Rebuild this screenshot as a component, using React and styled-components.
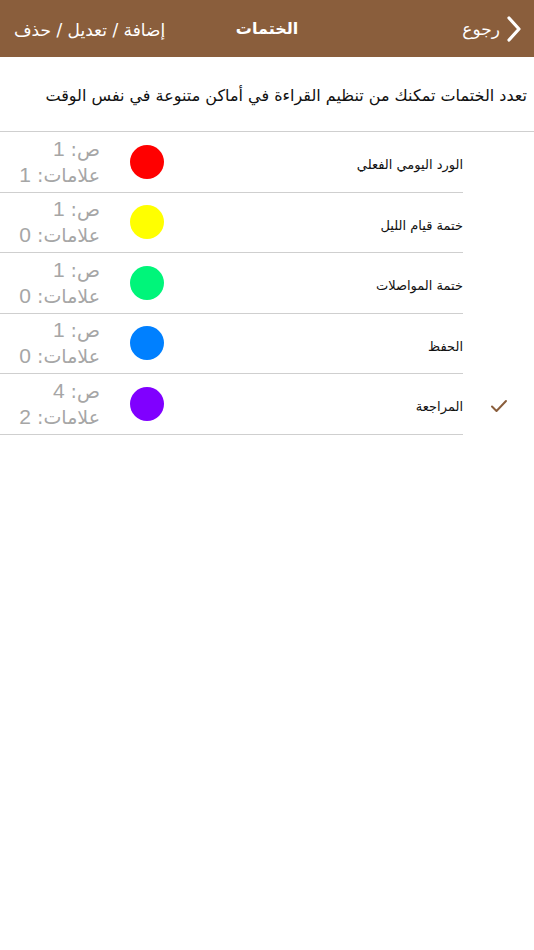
import React from 'react';
import styled, { createGlobalStyle } from 'styled-components';

const Global = createGlobalStyle`
    body {
        margin: 0;
        background: #fff;
        font-family: "DejaVu Sans", "Noto Sans", sans-serif;
    }
`;

const Page = styled.div`
    direction: rtl;
    width: 534px;
    min-height: 950px;
    background: #fff;
`;

const Header = styled.div`
    height: 57px;
    background: #8a5e3c;
    color: #fff;
    display: flex;
    align-items: center;
    justify-content: space-between;
    padding: 0 12px 0 14px;
    position: relative;
`;

const Back = styled.div`
    display: flex;
    align-items: center;
    gap: 6px;
    font-size: 17px;
`;

const Title = styled.div`
    position: absolute;
    left: 0;
    right: 0;
    text-align: center;
    font-size: 16px;
    font-weight: bold;
    pointer-events: none;
`;

const Actions = styled.div`
    font-size: 17px;
    padding-top: 2px;
`;

const Intro = styled.div`
    height: 71px;
    display: flex;
    align-items: center;
    padding: 3px 7px 0;
    font-size: 16px;
    color: #111;
    border-bottom: 1px solid #cfcfcf;
`;

const Row = styled.div`
    display: flex;
    height: 60.5px;
`;

const CheckCell = styled.div`
    width: 71px;
    display: flex;
    align-items: center;
    justify-content: center;
    padding-top: 4px;
    color: #8a5e3c;
`;

const Content = styled.div`
    flex: 1;
    display: flex;
    align-items: center;
    border-bottom: 1px solid #cfcfcf;
`;

const Name = styled.div`
    flex: 1;
    font-size: 13px;
    padding-top: 6px;
    color: #111;
`;

const Dot = styled.div`
    width: 34px;
    height: 34px;
    border-radius: 50%;
    background: ${p => p.color};
    margin-left: 30px;
`;

const Stats = styled.div`
    width: 100px;
    color: #a6a6a6;
    font-size: 19px;
    line-height: 26px;
`;

const Num = styled.span`
    font-family: "Liberation Sans", Arial, sans-serif;
    font-size: 21px;
`;

const items = [
    { name: 'الورد اليومي الفعلي', color: '#ff0000', page: 1, marks: 1 },
    { name: 'ختمة قيام الليل', color: '#ffff00', page: 1, marks: 0 },
    { name: 'ختمة المواصلات', color: '#00f57a', page: 1, marks: 0 },
    { name: 'الحفظ', color: '#0080ff', page: 1, marks: 0 },
    { name: 'المراجعة', color: '#8000ff', page: 4, marks: 2, checked: true },
];

function Check() {
    return (
        <svg width="18" height="14" viewBox="0 0 18 14">
            <path d="M2 7.5 L6.5 12 L16 2" fill="none" stroke="currentColor" strokeWidth="2" strokeLinecap="round" strokeLinejoin="round" />
        </svg>
    );
}

export default function App() {
    return (
        <Page>
            <Global />
            <Header>
                <Back>
                    <svg width="16" height="26" viewBox="0 0 16 26">
                        <path d="M3 2 L13 13 L3 24" fill="none" stroke="#fff" strokeWidth="3.2" strokeLinecap="round" strokeLinejoin="round" />
                    </svg>
                    <span>رجوع</span>
                </Back>
                <Title>الختمات</Title>
                <Actions>إضافة / تعديل / حذف</Actions>
            </Header>
            <Intro>تعدد الختمات تمكنك من تنظيم القراءة في أماكن متنوعة في نفس الوقت</Intro>
            {items.map(item => (
                <Row key={item.name}>
                    <CheckCell>{item.checked && <Check />}</CheckCell>
                    <Content>
                        <Name>{item.name}</Name>
                        <Dot color={item.color} />
                        <Stats>
                            <div>ص: <Num>{item.page}</Num></div>
                            <div>علامات: <Num>{item.marks}</Num></div>
                        </Stats>
                    </Content>
                </Row>
            ))}
        </Page>
    );
}
